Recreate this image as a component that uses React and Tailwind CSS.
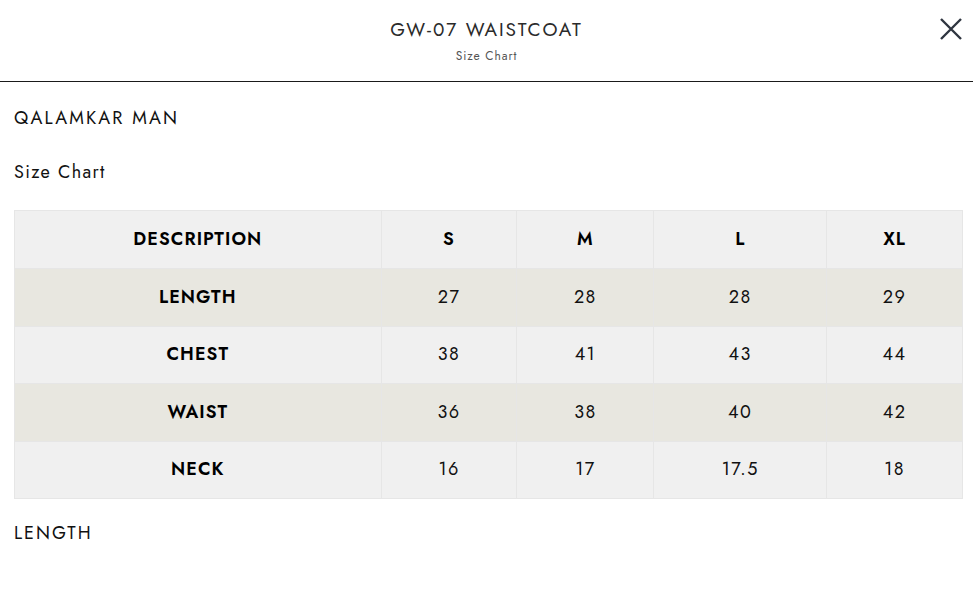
const rows = [
  { name: 'LENGTH', vals: ['27', '28', '28', '29'], alt: true },
  { name: 'CHEST', vals: ['38', '41', '43', '44'], alt: false },
  { name: 'WAIST', vals: ['36', '38', '40', '42'], alt: true },
  { name: 'NECK', vals: ['16', '17', '17.5', '18'], alt: false },
];

const cols = ['w-[367px]', 'w-[136px]', 'w-[137px]', 'w-[173px]', 'w-[136px]'];

export default function App() {
  return (
    <div className="min-h-[589px] bg-white text-black" style={{ fontFamily: "'Jost', 'Lato', 'Noto Sans', sans-serif" }}>
      {/* header */}
      <div className="relative h-[82px] border-b border-[#1a1a1a] flex flex-col items-center">
        <h1 className="mt-[18px] text-[19px] leading-[24px] tracking-[0.1em] text-[#2b2b2b]">GW-07 WAISTCOAT</h1>
        <p className="mt-[6px] text-[12px] leading-[16px] tracking-[0.08em] text-[#555]">Size Chart</p>
        <button className="absolute right-[9px] top-[16px] w-[26px] h-[26px] flex items-center justify-center text-[#2f3540]">
          <svg width="24" height="24" viewBox="0 0 24 24" fill="none" stroke="currentColor" strokeWidth="2.4" strokeLinecap="butt">
            <path d="M2 2L22 22M22 2L2 22" />
          </svg>
        </button>
      </div>

      {/* body */}
      <div className="pl-[14px] pt-[24px]">
        <p className="text-[18px] leading-[24px] tracking-[0.12em] text-[#111]">QALAMKAR MAN</p>
        <p className="mt-[30px] text-[18px] leading-[24px] tracking-[0.075em] text-[#111]">Size Chart</p>

        <table className="mt-[26px] w-[949px] border-collapse border border-[#e6e6e6] text-[18px] tracking-[0.08em]">
          <thead>
            <tr className="bg-[#f0f0f0] h-[58px]">
              {['DESCRIPTION', 'S', 'M', 'L', 'XL'].map((h, i) => (
                <th key={h} className={`${cols[i]} border border-[#e6e6e6] font-semibold text-center text-black tracking-[0.06em]`}>{h}</th>
              ))}
            </tr>
          </thead>
          <tbody>
            {rows.map((r) => (
              <tr key={r.name} className={`h-[57.5px] ${r.alt ? 'bg-[#e8e7e0]' : 'bg-[#f0f0f0]'}`}>
                <td className="border border-[#e6e6e6] font-semibold text-center tracking-[0.06em]">{r.name}</td>
                {r.vals.map((v, i) => (
                  <td key={i} className="border border-[#e6e6e6] text-center text-[#111]">{v}</td>
                ))}
              </tr>
            ))}
          </tbody>
        </table>

        <p className="mt-[22px] text-[18px] leading-[24px] tracking-[0.11em] text-[#111]">LENGTH</p>
      </div>
    </div>
  );
}
